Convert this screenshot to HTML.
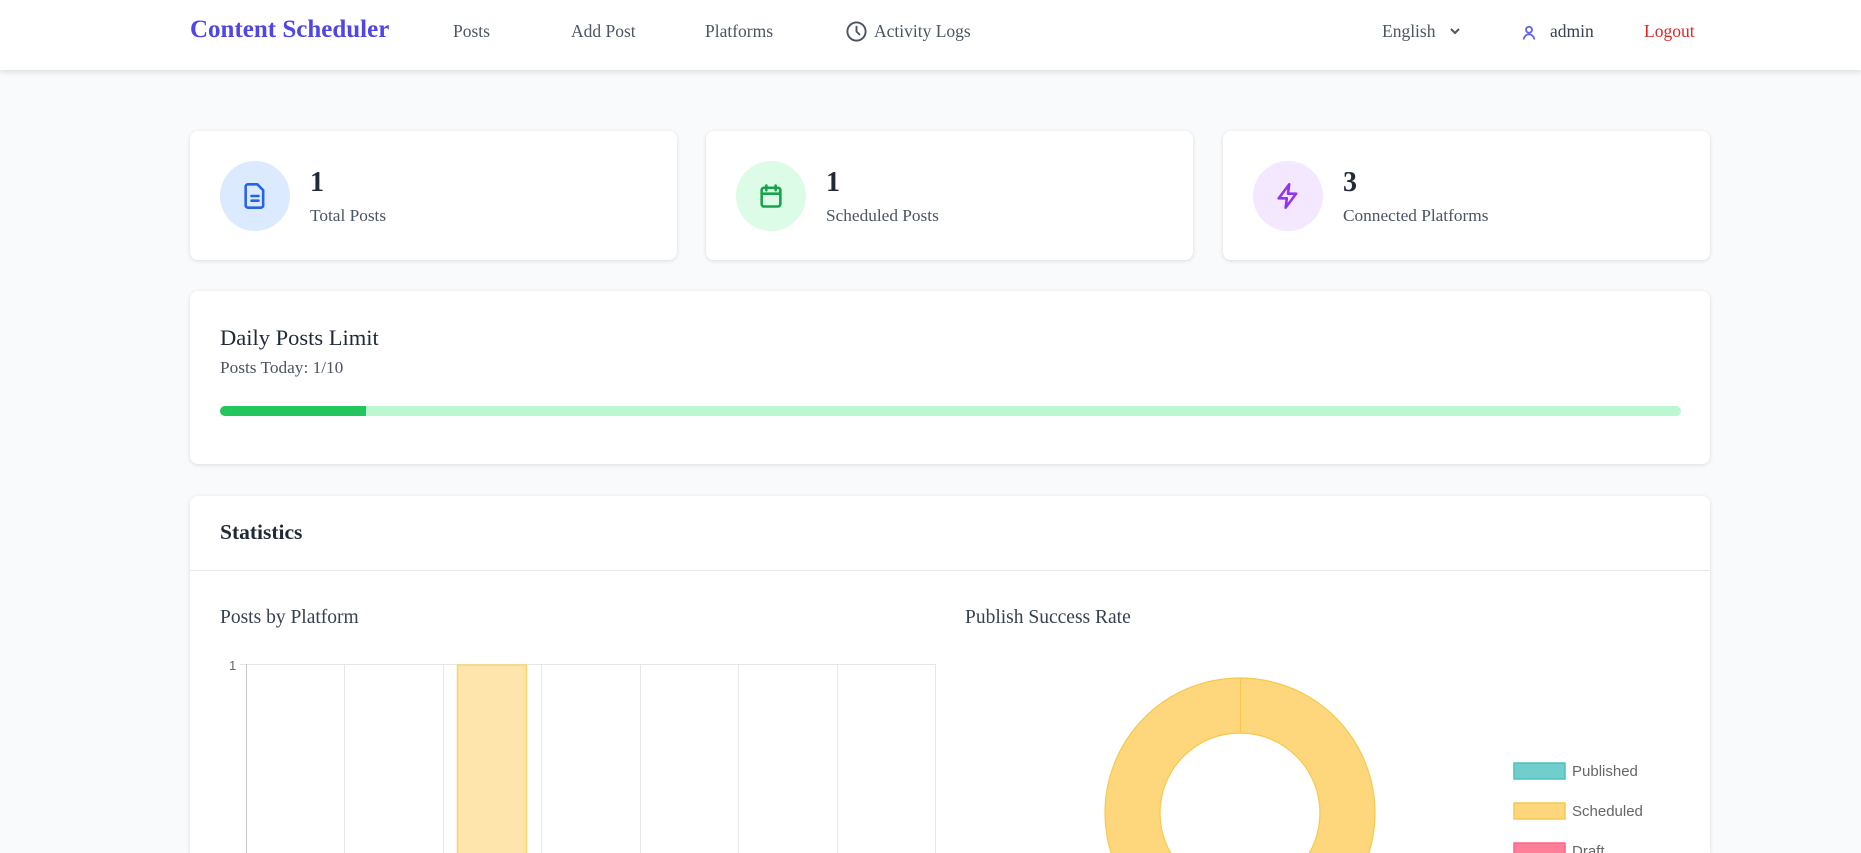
<!DOCTYPE html>
<html><head><meta charset="utf-8"><style>
*{box-sizing:border-box;margin:0;padding:0}
body{width:1861px;height:853px;overflow:hidden;background:#f9fafb;font-family:"Liberation Serif",serif;color:#1f2937;position:relative}
.nav{position:absolute;left:0;top:0;width:1861px;height:70px;background:#fff;box-shadow:0 2px 5px rgba(0,0,0,.12)}
.nav span{position:absolute;top:21px;font-size:17.5px;color:#4b5563;white-space:nowrap}
.card{position:absolute;background:#fff;border-radius:8px;box-shadow:0 1px 4px rgba(0,0,0,.12)}
.ic{position:absolute;left:30px;top:30px;width:70px;height:70px;border-radius:50%}
.ic svg{position:absolute;left:21px;top:21px}
.num{position:absolute;left:120px;top:36px;font-size:28px;font-weight:bold;color:#1f2937}
.lab{position:absolute;left:120px;top:75px;font-size:17.3px;color:#4b5563}
.ab{position:absolute;white-space:nowrap}
</style></head><body>
<div class="nav">
<span style="left:190px;top:16px;font-size:25px;font-weight:bold;color:#4f46e5">Content Scheduler</span>
<span style="left:453px">Posts</span>
<span style="left:571px">Add Post</span>
<span style="left:705px">Platforms</span>
<svg style="position:absolute;left:845px;top:20px" width="23" height="23" viewBox="0 0 24 24" fill="none" stroke="#4b5563" stroke-width="2" stroke-linecap="round"><circle cx="12" cy="12" r="9.5"/><path d="M12 7v5l3 3"/></svg>
<span style="left:874px">Activity Logs</span>
<span style="left:1382px">English</span>
<svg style="position:absolute;left:1449px;top:26px" width="12" height="10" viewBox="0 0 12 10" fill="none" stroke="#4b5563" stroke-width="2"><path d="M2 3l4 4 4-4"/></svg>
<svg style="position:absolute;left:1520px;top:23px" width="18" height="18" viewBox="0 0 24 24" fill="none" stroke="#6366f1" stroke-width="2.5" stroke-linecap="round"><circle cx="12" cy="9" r="4"/><path d="M5 21c1-4 4-6 7-6s6 2 7 6"/></svg>
<span style="left:1550px;color:#374151">admin</span>
<span style="left:1644px;color:#dc2626">Logout</span>
</div>

<div class="card" style="left:190px;top:131px;width:487px;height:129px">
<div class="ic" style="background:#dbeafe"><svg width="28" height="28" viewBox="0 0 24 24" fill="none" stroke="#2563eb" stroke-width="2.2" stroke-linejoin="round" stroke-linecap="round"><path d="M6 2h8l5 5v13a2 2 0 0 1-2 2H6a2 2 0 0 1-2-2V4a2 2 0 0 1 2-2z"/><path d="M9 12h6M9 16h6"/></svg></div>
<div class="num">1</div><div class="lab">Total Posts</div></div>
<div class="card" style="left:706px;top:131px;width:487px;height:129px">
<div class="ic" style="background:#dcfce7"><svg width="28" height="28" viewBox="0 0 24 24" fill="none" stroke="#16a34a" stroke-width="2.2" stroke-linejoin="round" stroke-linecap="round"><rect x="4" y="5" width="16" height="16" rx="2"/><path d="M8 3v4M16 3v4M4 10h16"/></svg></div>
<div class="num">1</div><div class="lab">Scheduled Posts</div></div>
<div class="card" style="left:1223px;top:131px;width:487px;height:129px">
<div class="ic" style="background:#f3e8ff"><svg width="28" height="28" viewBox="0 0 24 24" fill="none" stroke="#9333ea" stroke-width="2.2" stroke-linejoin="round" stroke-linecap="round"><path d="M13 2L4 14h7l-1 8 9-12h-7z"/></svg></div>
<div class="num">3</div><div class="lab">Connected Platforms</div></div>

<div class="card" style="left:190px;top:291px;width:1520px;height:173px">
<div class="ab" style="left:30px;top:34px;font-size:22.5px;color:#1f2937">Daily Posts Limit</div>
<div class="ab" style="left:30px;top:67px;font-size:17.3px;color:#4b5563">Posts Today: 1/10</div>
<div class="ab" style="left:30px;top:115px;width:1461px;height:10px;border-radius:5px;background:#bbf7d0;overflow:hidden"><div style="width:146px;height:10px;background:#22c55e"></div></div>
</div>

<div class="card" style="left:190px;top:496px;width:1520px;height:357px;border-radius:8px 8px 0 0">
<div class="ab" style="left:30px;top:24px;font-size:21.5px;font-weight:bold;color:#1f2937">Statistics</div>
<div class="ab" style="left:0;top:74px;width:1520px;height:1px;background:#e5e7eb"></div>
<div class="ab" style="left:30px;top:111px;font-size:19.5px;color:#374151">Posts by Platform</div>
<div class="ab" style="left:775px;top:111px;font-size:19.5px;color:#374151">Publish Success Rate</div>
</div>

<svg style="position:absolute;left:0;top:0" width="1861" height="853">
<g stroke="#e5e7eb" stroke-width="1">
<line x1="240" y1="664.5" x2="935" y2="664.5"/>
<line x1="344.5" y1="664" x2="344.5" y2="853"/><line x1="443.5" y1="664" x2="443.5" y2="853"/><line x1="541.5" y1="664" x2="541.5" y2="853"/><line x1="640.5" y1="664" x2="640.5" y2="853"/><line x1="738.5" y1="664" x2="738.5" y2="853"/><line x1="837.5" y1="664" x2="837.5" y2="853"/><line x1="935.5" y1="664" x2="935.5" y2="853"/>
</g>
<line x1="246.5" y1="664" x2="246.5" y2="853" stroke="#c8c8c8"/>
<text x="229" y="670" font-family="Liberation Sans" font-size="13" fill="#666">1</text>
<rect x="457.5" y="665" width="69" height="200" fill="#fde5ab" stroke="#fbd36b" stroke-width="1.5"/>
<circle cx="1240" cy="813" r="107.5" fill="none" stroke="#fed77c" stroke-width="55"/>
<circle cx="1240" cy="813" r="135" fill="none" stroke="#f6c84f" stroke-width="1.2"/>
<circle cx="1240" cy="813" r="80" fill="none" stroke="#f6c84f" stroke-width="1.2"/>
<line x1="1240.5" y1="678" x2="1240.5" y2="733" stroke="#f6c84f" stroke-width="1.2"/>
<rect x="1514" y="763" width="51" height="16" fill="#72cdcd" stroke="#4bc0c0" stroke-width="1.5"/>
<text x="1572" y="776" font-family="Liberation Sans" font-size="15" fill="#666">Published</text>
<rect x="1514" y="803" width="51" height="16" fill="#fed77c" stroke="#f6c84f" stroke-width="1.5"/>
<text x="1572" y="816" font-family="Liberation Sans" font-size="15" fill="#666">Scheduled</text>
<rect x="1514" y="843" width="51" height="16" fill="#ff7f98" stroke="#ff6384" stroke-width="1.5"/>
<text x="1572" y="856" font-family="Liberation Sans" font-size="15" fill="#666">Draft</text>
</svg>
</body></html>
